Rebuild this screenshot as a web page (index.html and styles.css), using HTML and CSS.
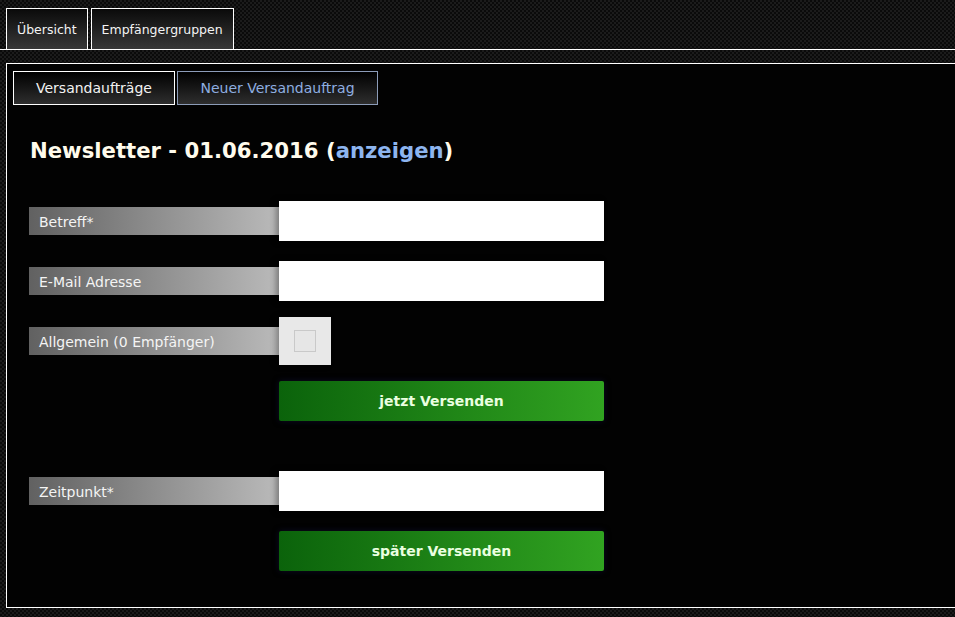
FILE: index.html
```html
<!DOCTYPE html>
<html lang="de">
<head>
<meta charset="utf-8">
<title>Newsletter</title>
<link rel="stylesheet" href="styles.css">
</head>
<body>
<nav class="topnav">
  <a class="toptab" href="#">Übersicht</a>
  <a class="toptab" href="#">Empfängergruppen</a>
</nav>
<main class="panel">
  <div class="subnav">
    <a class="subtab" href="#">Versandaufträge</a>
    <a class="subtab active" href="#">Neuer Versandauftrag</a>
  </div>
  <h1 class="title">Newsletter - 01.06.2016 (<a href="#" class="show">anzeigen</a>)</h1>
  <form class="form">
    <div class="row">
      <label class="label">Betreff*</label>
      <input class="field" type="text">
    </div>
    <div class="row">
      <label class="label">E-Mail Adresse</label>
      <input class="field" type="text">
    </div>
    <div class="row">
      <label class="label">Allgemein (0 Empfänger)</label>
      <span class="checkwrap"><span class="check"></span></span>
    </div>
    <div class="row">
      <span class="spacer"></span>
      <button class="btn" type="button">jetzt Versenden</button>
    </div>
    <div class="row gap">
      <label class="label">Zeitpunkt*</label>
      <input class="field" type="text">
    </div>
    <div class="row">
      <span class="spacer"></span>
      <button class="btn" type="button">später Versenden</button>
    </div>
  </form>
</main>
</body>
</html>
```

FILE: styles.css
```css
html, body {
  margin: 0;
  padding: 0;
  overflow: hidden;
}
body {
  height: 617px;
  background-color: #1b1b1b;
  background-image:
    linear-gradient(45deg, #0a0a0a 25%, transparent 25%, transparent 75%, #0a0a0a 75%),
    linear-gradient(45deg, #0a0a0a 25%, transparent 25%, transparent 75%, #0a0a0a 75%);
  background-size: 4px 4px;
  background-position: 0 0, 2px 2px;
  font-family: "DejaVu Sans", Verdana, sans-serif;
  color: #f2f2f2;
}
.topnav {
  display: flex;
  gap: 3px;
  padding: 8px 0 0 6px;
  border-bottom: 1px solid #fff;
}
.toptab {
  display: flex;
  align-items: center;
  height: 40px;
  padding: 0 10px;
  border: 1px solid #fff;
  border-bottom: 0;
  background: linear-gradient(#0a0a0a, #383838);
  color: #f4f4f4;
  font-size: 12.5px;
  text-decoration: none;
}
.panel {
  display: block;
  margin: 13px 0 0 6px;
  height: 543px;
  border: 1px solid #fff;
  border-right: 0;
  background: #020202;
}
.subnav {
  display: flex;
  gap: 2px;
  padding: 7px 0 0 6px;
}
.subtab {
  display: flex;
  align-items: center;
  justify-content: center;
  height: 32px;
  padding: 0 22px;
  border: 1px solid #fff;
  background: linear-gradient(#000, #2e2e2e);
  color: #f2f2f2;
  font-size: 14px;
  text-decoration: none;
}
.subtab.active {
  border-color: #8c9cb8;
  color: #8eaee0;
  padding: 0 22.5px;
}
.title {
  margin: 33px 0 0 23px;
  font-size: 21.2px;
  line-height: 26px;
  font-weight: bold;
  color: #fffbec;
}
.show {
  color: #8db5ef;
  text-decoration: none;
}
.form {
  margin: 37px 0 0 22px;
}
.row {
  display: flex;
  align-items: center;
  height: 40px;
  margin-bottom: 20px;
}
.row.gap {
  margin-top: 50px;
}
.label {
  display: flex;
  align-items: center;
  box-sizing: border-box;
  width: 250px;
  height: 28px;
  padding: 2px 0 0 10px;
  background: linear-gradient(to right, #616161, #bababa);
  color: #f4f4f4;
  font-size: 14px;
}
.field {
  box-sizing: border-box;
  width: 325px;
  height: 40px;
  margin: 0;
  border: 0;
  background: #fff;
  box-shadow: -3px 0 6px rgba(0, 0, 0, 0.35);
}
.checkwrap {
  display: flex;
  align-items: center;
  justify-content: center;
  flex: none;
  width: 52px;
  height: 48px;
  background: #e8e8e8;
  box-shadow: -3px 0 6px rgba(0, 0, 0, 0.3);
}
.check {
  box-sizing: border-box;
  width: 22px;
  height: 22px;
  border: 1px solid #c9c9c9;
  background: #e6e6e6;
}
.spacer {
  width: 250px;
  flex: none;
}
.btn {
  width: 325px;
  height: 40px;
  margin: 0;
  border: 0;
  border-radius: 2px;
  background: linear-gradient(to right, #0b630b, #31a321);
  color: #eaffe0;
  font-family: "DejaVu Sans", Verdana, sans-serif;
  font-size: 14px;
  font-weight: bold;
  box-shadow: 0 0 6px rgba(20, 20, 60, 0.6);
}
```
